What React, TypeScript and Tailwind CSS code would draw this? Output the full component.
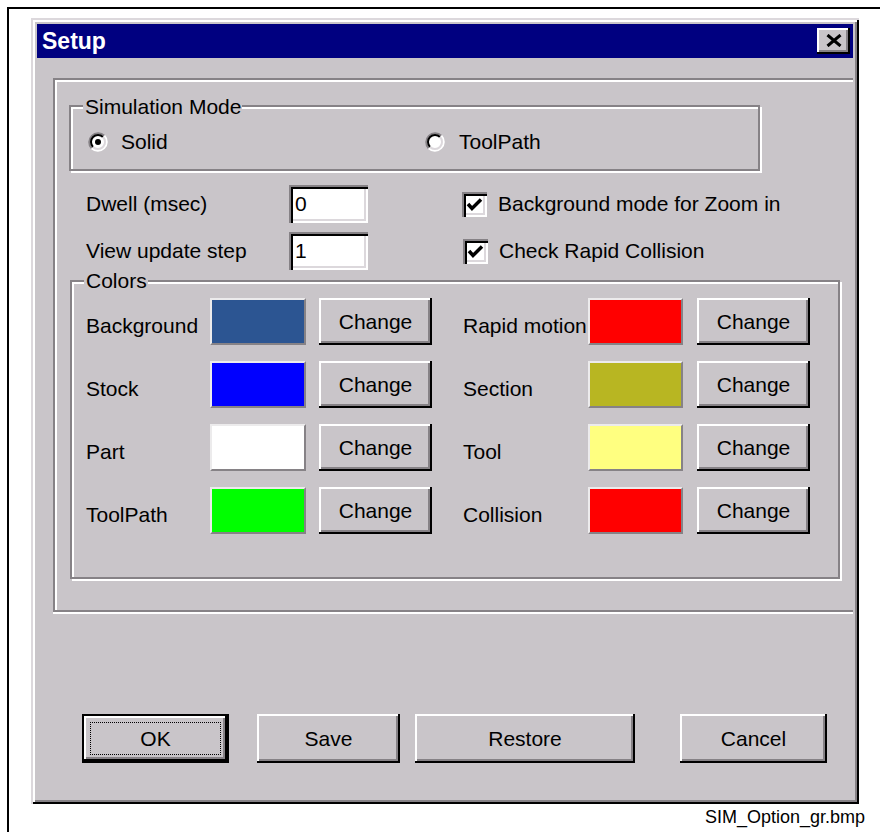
import React from 'react';

// classic 3D borders, drawn with stacked inset shadows
const raised = 'bg-[#c9c5c9] shadow-[inset_-2px_-2px_0_#000,inset_2px_2px_0_#fff,inset_-4px_-4px_0_#868286]';
const sunken = 'bg-white shadow-[inset_2px_2px_0_#868286,inset_4px_4px_0_#000,inset_-2px_-2px_0_#fff,inset_-4px_-4px_0_#dcd8dc]';
const etched = 'border-2 border-[#868286] shadow-[inset_2px_2px_0_#fff,2px_2px_0_#fff]';

type Swatch = { label: string; color: string };

const leftColors: Swatch[] = [
  { label: 'Background', color: 'bg-[#2c5592]' },
  { label: 'Stock', color: 'bg-[#0000ff]' },
  { label: 'Part', color: 'bg-white' },
  { label: 'ToolPath', color: 'bg-[#00ff00]' },
];

const rightColors: Swatch[] = [
  { label: 'Rapid motion', color: 'bg-[#ff0000]' },
  { label: 'Section', color: 'bg-[#b8b622]' },
  { label: 'Tool', color: 'bg-[#ffff80]' },
  { label: 'Collision', color: 'bg-[#ff0000]' },
];

function GroupBox({ title, top, className, children }: { title: string; top: string; className: string; children: React.ReactNode }) {
  return (
    <div className={`relative ${etched} ${className}`}>
      <span className={`absolute ${top} left-[12px] bg-[#c9c5c9] pl-[2px] pr-[1px] leading-[24px]`}>{title}</span>
      {children}
    </div>
  );
}

function Radio({ checked }: { checked?: boolean }) {
  return (
    <svg width="22" height="22" viewBox="0 0 22 22">
      <circle cx="11" cy="11" r="8" fill="#fff" />
      <path d="M4.64 17.36 A9 9 0 0 1 17.36 4.64" fill="none" stroke="#868286" strokeWidth="2" />
      <path d="M17.36 4.64 A9 9 0 0 1 4.64 17.36" fill="none" stroke="#fff" strokeWidth="2" />
      <path d="M6.05 15.95 A7 7 0 0 1 15.95 6.05" fill="none" stroke="#000" strokeWidth="2" />
      <path d="M15.95 6.05 A7 7 0 0 1 6.05 15.95" fill="none" stroke="#dcd8dc" strokeWidth="2" />
      {checked && <circle cx="11" cy="11" r="3" fill="#000" />}
    </svg>
  );
}

function CheckBox() {
  return (
    <div className={`w-[25px] h-[25px] ${sunken} flex items-center justify-center`}>
      <svg width="17" height="15" viewBox="0 0 17 15">
        <polyline points="2,7 6,11.5 15,2.5" fill="none" stroke="#000" strokeWidth="3.5" />
      </svg>
    </div>
  );
}

function Button({ label, className }: { label: string; className: string }) {
  return <div className={`${raised} flex items-center justify-center ${className}`}>{label}</div>;
}

function ColorRow({ item, right }: { item: Swatch; right?: boolean }) {
  return (
    <>
      <span className={`pt-[8px] ${right ? 'ml-[31px] w-[125px]' : 'w-[124px]'}`}>{item.label}</span>
      <div
        className={`h-[47px] ${right ? 'w-[95px]' : 'w-[96px]'} ${item.color} border-2 border-t-[#ecebec] border-l-[#ecebec] border-r-[#868286] border-b-[#868286]`}
      />
      <Button label="Change" className={`h-[47px] w-[113px] ${right ? 'ml-[14px]' : 'ml-[13px]'}`} />
    </>
  );
}

function SetupDialog() {
  return (
    <div className="w-[828px] h-[786px] p-[6px] flex flex-col bg-[#c9c5c9] shadow-[inset_2px_2px_0_#dcd8dc,inset_-2px_-2px_0_#000,inset_4px_4px_0_#fff,inset_-4px_-4px_0_#868286]">
      <div className="h-[34px] bg-[#000080] flex items-center justify-between pl-[5px] pr-[3px]">
        <span className="text-white font-bold text-[23px] leading-none">Setup</span>
        <div className={`w-[33px] h-[26px] ${raised} flex items-center justify-center pb-[1px]`}>
          <svg width="16" height="13" viewBox="0 0 16 13">
            <path d="M1.5 1 L14.5 12 M14.5 1 L1.5 12" stroke="#000" strokeWidth="3" />
          </svg>
        </div>
      </div>

      <div className="ml-[16px] mt-[20px] w-[800px] h-[534px] border-2 border-r-0 border-[#868286] shadow-[inset_2px_2px_0_#fff,0_2px_0_#fff]">
        <GroupBox title="Simulation Mode" top="-top-[12px]" className="ml-[14px] mt-[25px] w-[691px] h-[66px]">
          <div className="mt-[24px] pl-[16px] h-[22px] flex items-center">
            <label className="w-[337px] flex items-center gap-[12px]">
              <Radio checked />
              <span>Solid</span>
            </label>
            <label className="flex items-center gap-[13px]">
              <Radio />
              <span>ToolPath</span>
            </label>
          </div>
        </GroupBox>

        <div className="ml-[31px] mt-[14px] flex flex-col gap-[9px]">
          <div className="h-[38px] flex items-center">
            <span className="w-[203px]">Dwell (msec)</span>
            <div className={`w-[79px] h-[38px] ${sunken} pl-[6px] flex items-center`}>0</div>
            <div className="ml-[94px] flex items-center gap-[11px]">
              <CheckBox />
              <span>Background mode for Zoom in</span>
            </div>
          </div>
          <div className="h-[38px] flex items-center">
            <span className="w-[203px]">View update step</span>
            <div className={`w-[79px] h-[38px] ${sunken} pl-[6px] flex items-center`}>1</div>
            <div className="ml-[95px] flex items-center gap-[11px]">
              <CheckBox />
              <span>Check Rapid Collision</span>
            </div>
          </div>
        </div>

        <GroupBox title="Colors" top="-top-[13px]" className="ml-[15px] mt-[10px] w-[770px] h-[299px]">
          <div className="pt-[16px] pl-[14px] flex flex-col gap-[16px]">
            {leftColors.map((item, i) => (
              <div key={item.label} className="h-[47px] flex items-center">
                <ColorRow item={item} />
                <ColorRow item={rightColors[i]} right />
              </div>
            ))}
          </div>
        </GroupBox>
      </div>

      <div className="mt-[102px] ml-[45px] flex">
        <div className="w-[147px] h-[49px] border-2 border-black">
          <div className={`h-full ${raised} p-[6px]`}>
            <div className="h-full border border-dotted border-black flex items-center justify-center">OK</div>
          </div>
        </div>
        <Button label="Save" className="ml-[28px] w-[143px] h-[49px]" />
        <Button label="Restore" className="ml-[15px] w-[220px] h-[49px]" />
        <Button label="Cancel" className="ml-[45px] w-[147px] h-[49px]" />
      </div>
    </div>
  );
}

export default function App() {
  return (
    <div className="w-[880px] h-[832px] bg-white pt-[7px] pl-[7px] font-['Liberation_Sans',Arial,sans-serif] text-[21px] text-black">
      <div className="h-full border-l-2 border-t-2 border-black pl-[22px] pt-[9px]">
        <SetupDialog />
        <p className="ml-[674px] mt-[3px] text-[18px] leading-[21px]">SIM_Option_gr.bmp</p>
      </div>
    </div>
  );
}
